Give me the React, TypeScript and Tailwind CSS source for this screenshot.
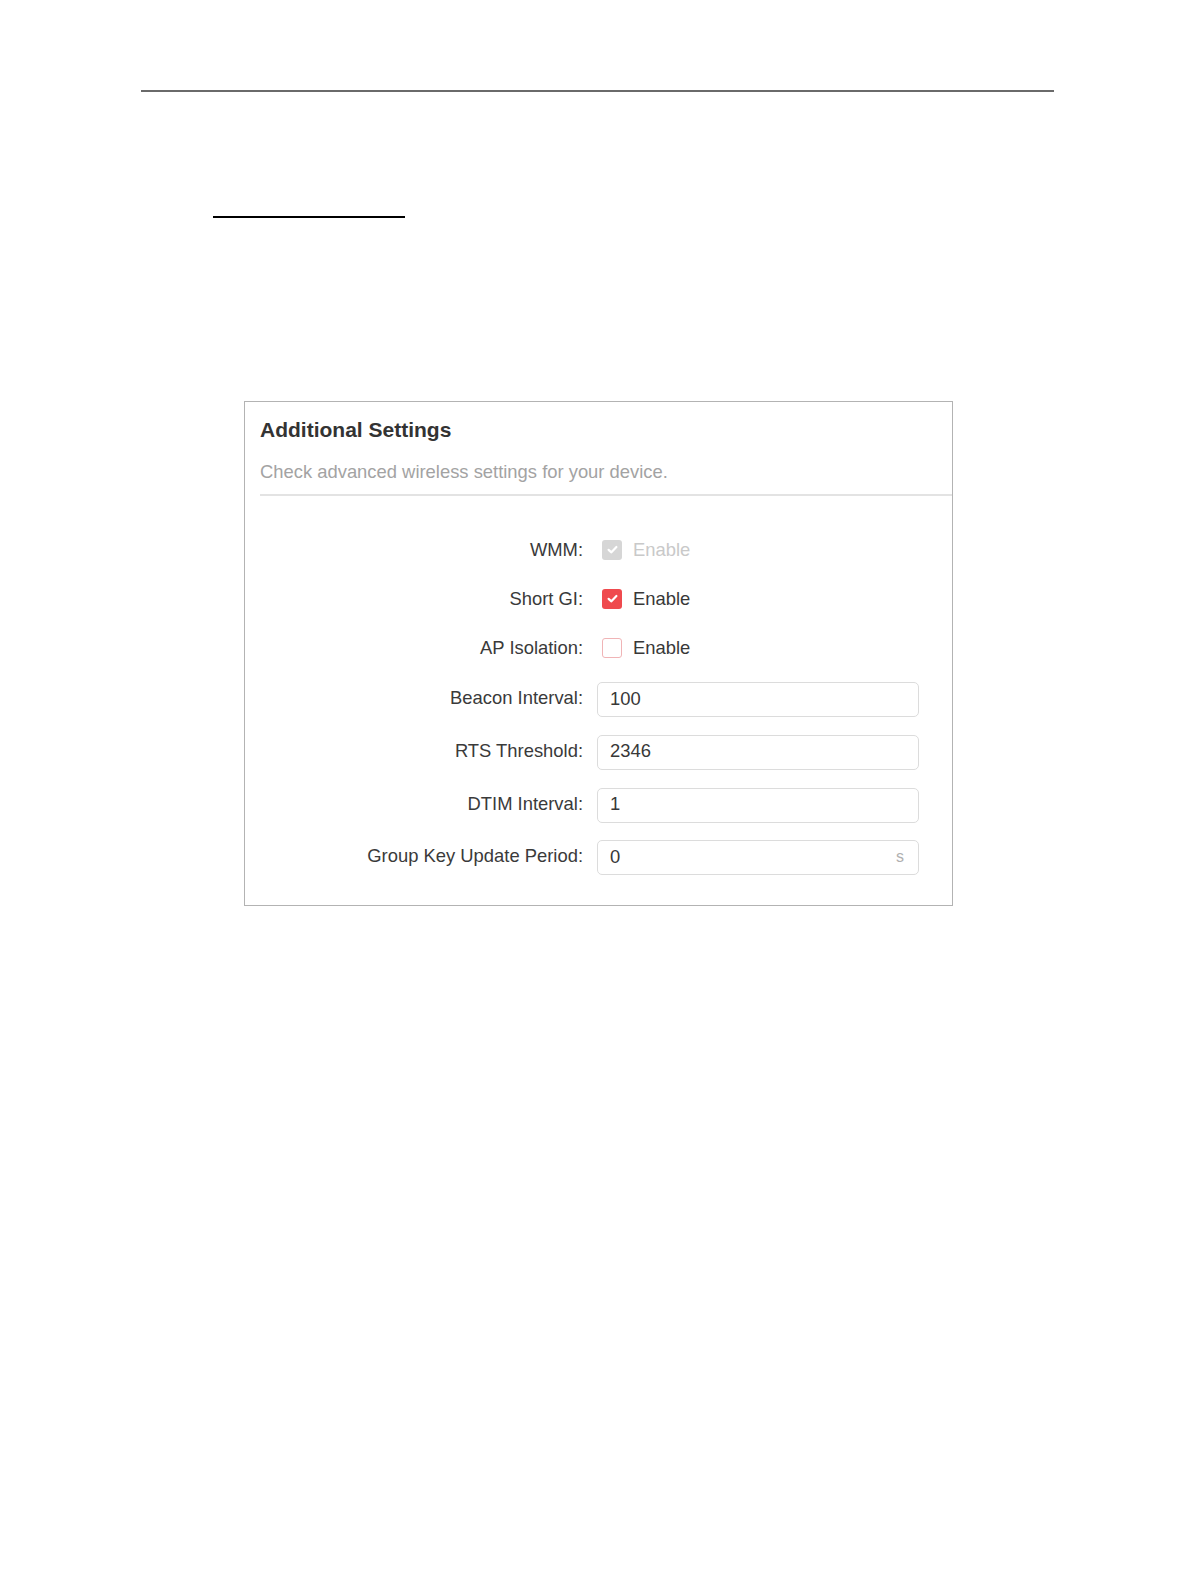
import React from "react";

const font = { fontFamily: '"Liberation Sans", Arial, sans-serif' };

function Check({ color }: { color: string }) {
  return (
    <svg width="13" height="13" viewBox="0 0 12 12" fill="none">
      <path d="M2.4 6.3 L5 8.6 L9.6 3.7" stroke={color} strokeWidth="2" strokeLinecap="round" strokeLinejoin="round" />
    </svg>
  );
}

function CheckRow({ label, state }: { label: string; state: "disabled" | "on" | "off" }) {
  return (
    <div className="flex h-[35px] items-center">
      <div className="w-[338px] text-right text-[18.4px] leading-[22px] text-[#3a3a3a]">{label}</div>
      <div className="ml-[19px] flex items-center">
        {state === "disabled" && (
          <div className="flex h-[20px] w-[20px] items-center justify-center rounded-[3px] bg-[#d6d6d6]">
            <Check color="#ffffff" />
          </div>
        )}
        {state === "on" && (
          <div className="flex h-[20px] w-[20px] items-center justify-center rounded-[3px] bg-[#ef4a4e]">
            <Check color="#ffffff" />
          </div>
        )}
        {state === "off" && (
          <div className="h-[20px] w-[20px] rounded-[3px] border-[1.5px] border-[#f0b4b6] bg-white" />
        )}
        <span
          className={
            "ml-[11px] text-[18.4px] leading-[22px] " +
            (state === "disabled" ? "text-[#c9c9c9]" : "text-[#383838]")
          }
        >
          Enable
        </span>
      </div>
    </div>
  );
}

function InputRow({ label, value, suffix }: { label: string; value: string; suffix?: string }) {
  return (
    <div className="flex h-[35px] items-center">
      <div className="w-[338px] pb-[3px] text-right text-[18.4px] leading-[22px] text-[#3a3a3a]">{label}</div>
      <div className="ml-[14px] flex h-[35px] w-[322px] items-center justify-between rounded-[5px] border border-[#dcdcdc] bg-white pb-[2px] pl-[12px] pr-[14px]">
        <span className="text-[18.4px] leading-[22px] text-[#383838]">{value}</span>
        {suffix && <span className="text-[16px] leading-[22px] text-[#b0b0b0]">{suffix}</span>}
      </div>
    </div>
  );
}

export default function App() {
  return (
    <div className="h-[1582px] w-[1196px] bg-white" style={font}>
      <div className="pt-[90px]">
        <div className="ml-[141px] h-[2px] w-[913px] bg-[#6a6a6a]" />
      </div>
      <div className="ml-[213px] mt-[124px] h-[2px] w-[192px] bg-black" />
      <div className="ml-[244px] mt-[183px] h-[505px] w-[709px] border border-[#b3b3b3] bg-white">
        <div className="pl-[15px] pt-[16px]">
          <div className="text-[21px] font-bold leading-[24px] text-[#333333]">Additional Settings</div>
          <div className="mt-[19px] text-[18.4px] leading-[22px] text-[#a3a3a3]">
            Check advanced wireless settings for your device.
          </div>
          <div className="mt-[11px] h-[2px] bg-[#e3e3e3]" />
        </div>
        <div className="flex flex-col pt-[36px]">
          <div className="flex flex-col gap-[14px]">
            <CheckRow label="WMM:" state="disabled" />
            <CheckRow label="Short GI:" state="on" />
            <CheckRow label="AP Isolation:" state="off" />
          </div>
          <div className="mt-[17px] flex flex-col gap-[17.8px]">
            <InputRow label="Beacon Interval:" value="100" />
            <InputRow label="RTS Threshold:" value="2346" />
            <InputRow label="DTIM Interval:" value="1" />
            <InputRow label="Group Key Update Period:" value="0" suffix="s" />
          </div>
        </div>
      </div>
    </div>
  );
}
